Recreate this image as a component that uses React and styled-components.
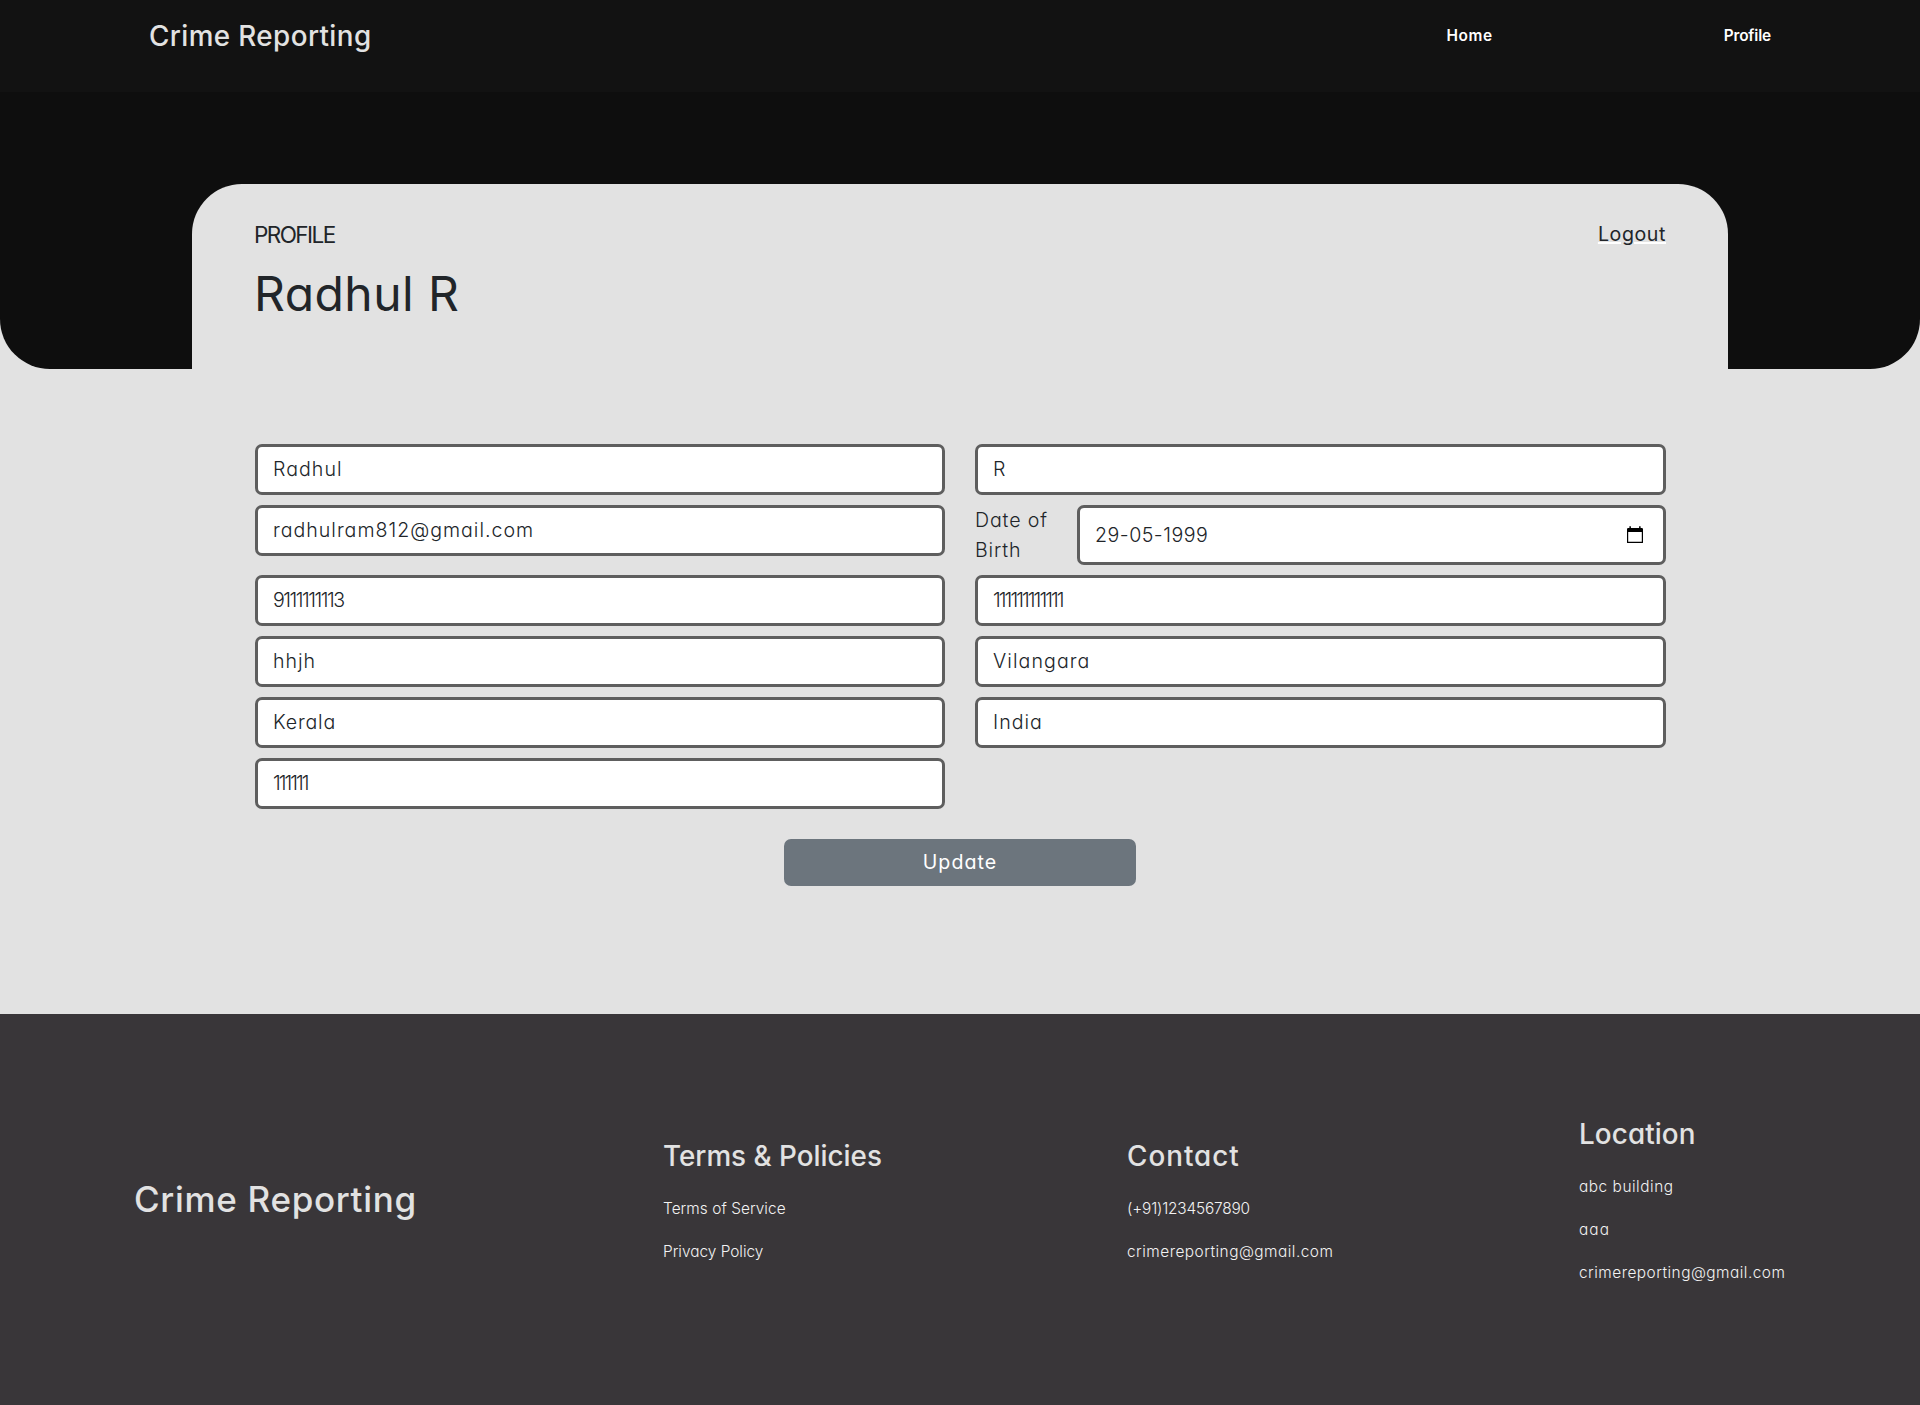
import React from 'react';
import styled, { createGlobalStyle } from 'styled-components';

const GlobalStyle = createGlobalStyle`
  *, *::before, *::after { box-sizing: border-box; }
  body {
    margin: 0;
    background: #e2e2e2;
    color: #212529;
    font-family: Inter, "Liberation Sans", sans-serif;
    font-size: 19.6px;
    font-weight: 300;
    font-feature-settings: "cv11";
    line-height: 30px;
  }
`;

const Header = styled.header`
  display: flex;
  align-items: center;
  height: 92px;
  padding: 0 149px 21px;
  background: #121212;
`;

const Brand = styled.div`
  flex: 1;
  color: #e2e2e2;
  font-size: 27.8px;
  font-weight: 500;
  letter-spacing: 0.0145em;
  white-space: nowrap;
`;

const Nav = styled.nav`
  display: flex;
  gap: 231px;
`;

const NavLink = styled.a`
  color: #fff;
  font-size: 15.4px;
  font-weight: 600;
  letter-spacing: ${(p) => p.$tracking};
`;

const Hero = styled.section`
  height: 277px;
  padding: 92px 192px 0;
  background: #0e0e0e;
  border-radius: 0 0 50px 50px;
`;

const ProfileHead = styled.div`
  display: flex;
  justify-content: space-between;
  align-items: flex-start;
  height: 185px;
  padding: 39px 62px 0;
  background: #e2e2e2;
  border-radius: 50px 50px 0 0;
`;

const Caption = styled.div`
  font-size: 22.5px;
  font-weight: 400;
  line-height: 24px;
  letter-spacing: -0.07em;
`;

const Name = styled.h1`
  margin: 17px 0 0;
  font-size: 48px;
  font-weight: 400;
  line-height: 60px;
  letter-spacing: 0.0095em;
`;

const Logout = styled.a`
  margin-top: -1px;
  font-weight: 400;
  line-height: 24px;
  letter-spacing: 0.03em;
  text-decoration: underline #fff 2px;
  text-underline-offset: 1px;
`;

const Form = styled.div`
  display: grid;
  grid-template-columns: 690px 691px;
  gap: 10px 30px;
  align-items: start;
  padding: 75px 254px 0 255px;
`;

const Field = styled.div`
  display: flex;
  align-items: center;
  justify-content: space-between;
  flex: 1;
  height: ${(p) => (p.$tall ? '60px' : '51px')};
  padding: 0 20px ${(p) => (p.$tall ? '0' : '2px')} 15px;
  background: #fff;
  border: 3px solid #5e5e5e;
  border-radius: 7px;
  letter-spacing: ${(p) => p.$tracking};
`;

const DateRow = styled.div`
  display: flex;
`;

const DateLabel = styled.label`
  width: 102px;
  padding-right: 20px;
  letter-spacing: 0.044em;
`;

const Actions = styled.div`
  display: flex;
  justify-content: center;
  padding: 30px 0 128px;
`;

const UpdateButton = styled.button`
  width: 352px;
  height: 47px;
  padding: 0 0 2px;
  border: 0;
  border-radius: 7px;
  background: #6c757d;
  color: #fff;
  font: inherit;
  font-weight: 400;
  letter-spacing: 0.055em;
`;

const Footer = styled.footer`
  display: grid;
  grid-template-columns: 529px 464px 452px auto;
  align-items: center;
  height: 391px;
  padding: 2px 0 0 134px;
  background: #393639;
  color: #e2e2e2;
`;

const FooterBrand = styled.div`
  margin-bottom: 24px;
  font-size: 35px;
  font-weight: 500;
  line-height: 54px;
  letter-spacing: 0.0195em;
`;

const FooterTitle = styled.h2`
  margin: 0 0 23px;
  font-size: 27.8px;
  font-weight: 500;
  line-height: 35px;
  letter-spacing: ${(p) => p.$tracking};
`;

const FooterLine = styled.div`
  padding-bottom: 19px;
  color: #f2f2f2;
  font-size: 15.4px;
  line-height: 24px;
  letter-spacing: ${(p) => p.$tracking};
`;

const CalendarIcon = () => (
  <svg width="16" height="18" viewBox="0 0 16 18" fill="none">
    <path d="M0.6 4V16.4H15.4V4" stroke="#000" strokeWidth="1.2" strokeLinejoin="round" />
    <path d="M0 3.2Q0 2 1.2 2H2.4V0.3H3.9V2H12.1V0.3H13.6V2H14.8Q16 2 16 3.2V6H0Z" fill="#000" />
  </svg>
);

const details = [
  ['9111111113', '-0.075em'],
  ['111111111111', '-0.0975em'],
  ['hhjh', '0.0463em'],
  ['Vilangara', '0.0545em'],
  ['Kerala', '0.0426em'],
  ['India', '0.0511em'],
  ['111111', '-0.1em'],
];

const footerColumns = [
  {
    title: ['Terms & Policies', '0'],
    lines: [['Terms of Service', '0.0035em'], ['Privacy Policy', '0']],
  },
  {
    title: ['Contact', '0.036em'],
    lines: [['(+91)1234567890', '-0.0118em'], ['crimereporting@gmail.com', '0.0315em']],
  },
  {
    title: ['Location', '0.004em'],
    lines: [['abc building', '0.0345em'], ['aaa', '0.07em'], ['crimereporting@gmail.com', '0.0315em']],
  },
];

export default function App() {
  return (
    <>
      <GlobalStyle />
      <Header>
        <Brand>Crime Reporting</Brand>
        <Nav>
          <NavLink $tracking="0.04em">Home</NavLink>
          <NavLink $tracking="-0.01em">Profile</NavLink>
        </Nav>
      </Header>
      <Hero>
        <ProfileHead>
          <div>
            <Caption>PROFILE</Caption>
            <Name>Radhul R</Name>
          </div>
          <Logout>Logout</Logout>
        </ProfileHead>
      </Hero>
      <main>
        <Form>
          <Field $tracking="0.052em">Radhul</Field>
          <Field>R</Field>
          <Field $tracking="0.0505em">radhulram812@gmail.com</Field>
          <DateRow>
            <DateLabel>Date of Birth</DateLabel>
            <Field $tall $tracking="0.025em">
              29-05-1999
              <CalendarIcon />
            </Field>
          </DateRow>
          {details.map(([value, tracking]) => (
            <Field key={value} $tracking={tracking}>{value}</Field>
          ))}
        </Form>
        <Actions>
          <UpdateButton type="button">Update</UpdateButton>
        </Actions>
      </main>
      <Footer>
        <FooterBrand>Crime Reporting</FooterBrand>
        {footerColumns.map(({ title, lines }) => (
          <div key={title[0]}>
            <FooterTitle $tracking={title[1]}>{title[0]}</FooterTitle>
            {lines.map(([text, tracking]) => (
              <FooterLine key={text} $tracking={tracking}>{text}</FooterLine>
            ))}
          </div>
        ))}
      </Footer>
    </>
  );
}
